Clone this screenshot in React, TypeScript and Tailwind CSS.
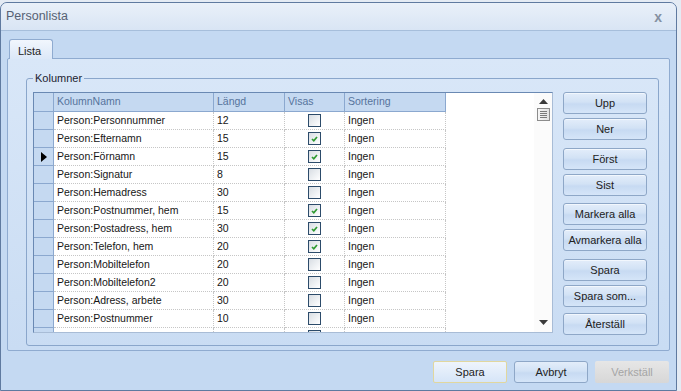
import React from "react";

type Row = [string, string, boolean];

const rows: Row[] = [
  ["Person:Personnummer", "12", false],
  ["Person:Efternamn", "15", true],
  ["Person:Förnamn", "15", true],
  ["Person:Signatur", "8", false],
  ["Person:Hemadress", "30", false],
  ["Person:Postnummer, hem", "15", true],
  ["Person:Postadress, hem", "30", true],
  ["Person:Telefon, hem", "20", true],
  ["Person:Mobiltelefon", "20", false],
  ["Person:Mobiltelefon2", "20", false],
  ["Person:Adress, arbete", "30", false],
  ["Person:Postnummer", "10", false],
  ["Person:Postadress", "30", false],
];

function CheckBox({ checked }: { checked: boolean }) {
  return (
    <div className="w-[13px] h-[13px] border border-[#2c4b6a] bg-[linear-gradient(135deg,#d8dde3_0%,#f3f5f7_70%,#ffffff_100%)] flex items-center justify-center">
      {checked && (
        <svg width="9" height="8" viewBox="0 0 9 8">
          <path d="M2 4 L3.8 5.8 L7 2" fill="none" stroke="#2f9a32" strokeWidth="1.7" />
        </svg>
      )}
    </div>
  );
}

function Btn({ children }: { children: React.ReactNode }) {
  return (
    <div className="h-[22px] w-[84px] rounded-[3px] border border-[#8ea7c7] bg-[linear-gradient(to_bottom,#e3edfa_0%,#d2e2f5_45%,#c7daf2_55%,#d5e5f8_100%)] shadow-[inset_0_1px_0_#f2f7fd] flex items-center justify-center text-[11px] text-[#222] whitespace-nowrap">
      {children}
    </div>
  );
}

export default function App() {
  const cell = "border-r border-b border-dotted border-[#c6c6c6] flex items-center pl-[3px] whitespace-nowrap";
  return (
    <div className="w-[681px] h-[391px] bg-[#e4ebf4] pt-[2px] pr-[4px] font-['Liberation_Sans',Arial,sans-serif] overflow-hidden">
      <div className="h-[389px] flex flex-col border border-[#5f7aa0] rounded-t-[7px] bg-[#c4d9f2] overflow-hidden">
        {/* title bar */}
        <div className="h-[28px] shrink-0 flex items-center justify-between pl-[5px] pr-[14px] border-b border-[#a6bedb] bg-[linear-gradient(to_bottom,#e9f0f9,#d9e5f4)]">
          <span className="text-[12.5px] text-[#566174]">Personlista</span>
          <span className="text-[14px] font-bold text-[#8590a1] leading-none">x</span>
        </div>
        {/* body */}
        <div className="flex-1 flex flex-col pt-[8px] px-[6px]">
          <div className="flex pl-[2px]">
            <div className="relative z-10 h-[20px] w-[44px] border-t border-l border-r border-[#8fabd0] rounded-t-[3px] bg-[linear-gradient(to_bottom,#f1f6fd,#dce8f8)] flex items-start pt-[3px] pl-[8px] text-[11px] text-[#222]">
              Lista
            </div>
          </div>
          <div className="-mt-[1px] h-[293px] border border-[#8fabd0] rounded-[2px] bg-[linear-gradient(to_bottom,#d9e7f8,#c9dcf3)] flex flex-col pl-[18px] pr-[10px] pt-[12px]">
            <fieldset className="h-[275px] border border-[#8aa6cb] rounded-[3px] pl-[6px] pr-[10px] flex flex-col">
              <legend className="ml-0 px-[2px] text-[11px] leading-[14px] text-[#1c2330]">Kolumner</legend>
              <div className="flex pt-[7px]">
                {/* grid */}
                <div className="w-[520px] h-[241px] border-t border-l border-[#6a89b3] border-r border-b border-r-[#a8bcd6] border-b-[#a8bcd6] flex bg-white overflow-hidden">
                  <div className="flex-1 flex flex-col overflow-hidden">
                    <div className="flex h-[19px] shrink-0 text-[10.5px] text-[#56739c]">
                      <div className="w-[20px] bg-[#c5d9f1] border-r border-b border-[#8ba8cf]" />
                      <div className="w-[160px] bg-[#c5d9f1] border-r border-b border-[#8ba8cf] flex items-center pl-[3px]">KolumnNamn</div>
                      <div className="w-[71px] bg-[#c5d9f1] border-r border-b border-[#8ba8cf] flex items-center pl-[3px]">Längd</div>
                      <div className="w-[60px] bg-[#c5d9f1] border-r border-b border-[#8ba8cf] flex items-center pl-[3px]">Visas</div>
                      <div className="w-[101px] bg-[#c5d9f1] border-r border-b border-[#8ba8cf] flex items-center pl-[3px]">Sortering</div>
                    </div>
                    {rows.map(([name, len, vis], i) => (
                      <div key={i} className="flex h-[18px] shrink-0 text-[10.5px] text-[#161616]">
                        <div className="w-[20px] bg-[#c5d9f1] border-r border-b border-[#8ba8cf] flex items-center justify-center">
                          {i === 2 && (
                            <svg width="6" height="10" viewBox="0 0 6 10">
                              <path d="M0 0 L6 5 L0 10 Z" fill="#000" />
                            </svg>
                          )}
                        </div>
                        <div className={`w-[160px] ${cell}`}>{name}</div>
                        <div className={`w-[71px] ${cell}`}>{len}</div>
                        <div className="w-[60px] border-r border-b border-dotted border-[#c6c6c6] flex items-center justify-center">
                          <CheckBox checked={vis} />
                        </div>
                        <div className={`w-[101px] ${cell}`}>Ingen</div>
                      </div>
                    ))}
                  </div>
                  {/* scrollbar */}
                  <div className="w-[18px] bg-[#fbfbfb] flex flex-col items-center">
                    <svg className="mt-[6px]" width="9" height="5" viewBox="0 0 9 5">
                      <path d="M0 5 L4.5 0 L9 5 Z" fill="#3a3a3a" />
                    </svg>
                    <div className="mt-[4px] w-[13px] h-[13px] border border-[#8c8c8c] bg-[linear-gradient(to_right,#f6f6f6,#e2e2e2)] flex flex-col items-center justify-center gap-[1px]">
                      <div className="w-[7px] h-[1px] bg-[#7a7a7a]" />
                      <div className="w-[7px] h-[1px] bg-[#7a7a7a]" />
                      <div className="w-[7px] h-[1px] bg-[#7a7a7a]" />
                      <div className="w-[7px] h-[1px] bg-[#7a7a7a]" />
                    </div>
                    <div className="flex-1" />
                    <svg className="mb-[7px]" width="9" height="5" viewBox="0 0 9 5">
                      <path d="M0 0 L9 0 L4.5 5 Z" fill="#3a3a3a" />
                    </svg>
                  </div>
                </div>
                {/* buttons */}
                <div className="ml-[10px] flex flex-col">
                  <Btn>Upp</Btn>
                  <div className="h-[4px]" />
                  <Btn>Ner</Btn>
                  <div className="h-[8px]" />
                  <Btn>Först</Btn>
                  <div className="h-[4px]" />
                  <Btn>Sist</Btn>
                  <div className="h-[7px]" />
                  <Btn>Markera alla</Btn>
                  <div className="h-[4px]" />
                  <Btn>Avmarkera alla</Btn>
                  <div className="h-[8px]" />
                  <Btn>Spara</Btn>
                  <div className="h-[4px]" />
                  <Btn>Spara som...</Btn>
                  <div className="h-[6px]" />
                  <Btn>Återställ</Btn>
                </div>
              </div>
            </fieldset>
          </div>
          {/* bottom buttons */}
          <div className="mt-[10px] flex justify-end gap-[7px] pr-[1px]">
            <div className="h-[22px] w-[74px] rounded-[2px] border border-[#e1d79e] bg-[linear-gradient(to_bottom,#eef4fc,#d6e5f8)] flex items-center justify-center text-[11px] text-[#222]">
              Spara
            </div>
            <div className="h-[22px] w-[74px] rounded-[3px] border border-[#8ea7c7] bg-[linear-gradient(to_bottom,#e3edfa_0%,#d2e2f5_45%,#c7daf2_55%,#d5e5f8_100%)] flex items-center justify-center text-[11px] text-[#222]">
              Avbryt
            </div>
            <div className="h-[22px] w-[74px] rounded-[2px] bg-[linear-gradient(to_bottom,#e6e6e6,#d7d7d7)] flex items-center justify-center text-[11px] text-[#a5a5a5]">
              Verkställ
            </div>
          </div>
        </div>
      </div>
    </div>
  );
}
